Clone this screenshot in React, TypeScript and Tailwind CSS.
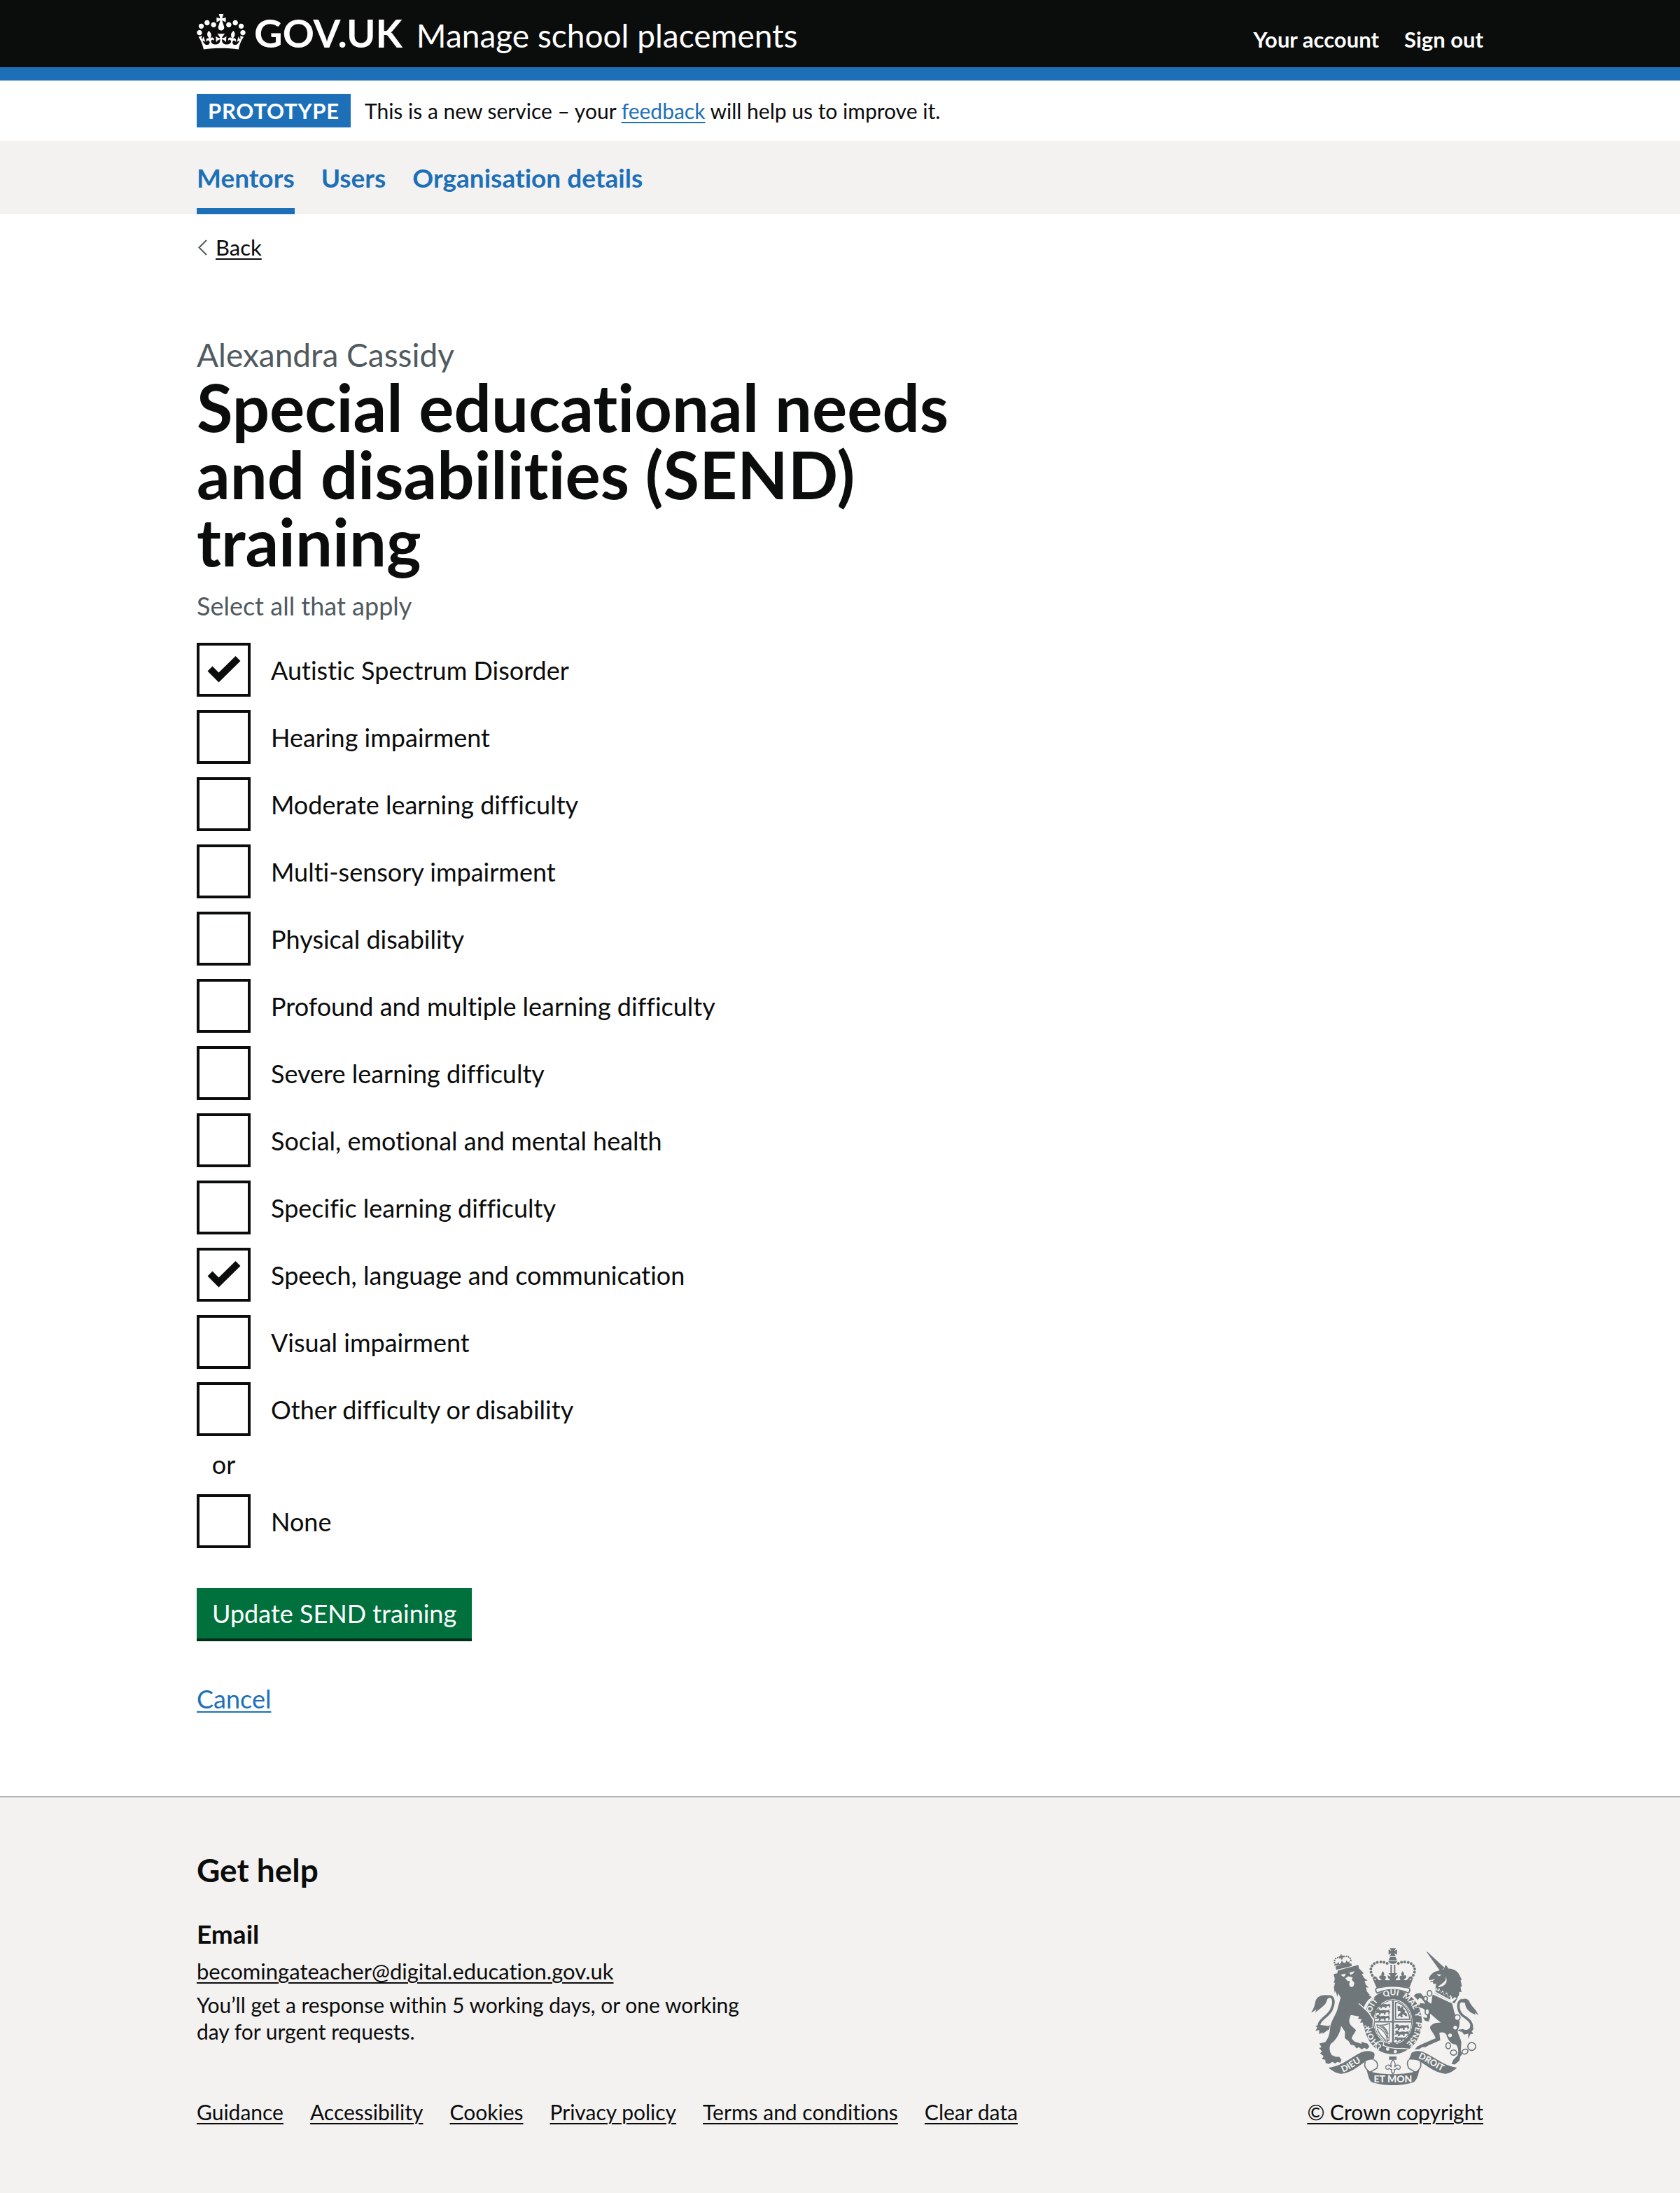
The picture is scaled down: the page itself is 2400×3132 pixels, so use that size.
import { useState } from 'react';
import type { ReactNode } from 'react';

const CREST = '#6f777b';
const PAPER = '#f3f2f1';

const CONDITIONS = [
  'Autistic Spectrum Disorder',
  'Hearing impairment',
  'Moderate learning difficulty',
  'Multi-sensory impairment',
  'Physical disability',
  'Profound and multiple learning difficulty',
  'Severe learning difficulty',
  'Social, emotional and mental health',
  'Specific learning difficulty',
  'Speech, language and communication',
  'Visual impairment',
  'Other difficulty or disability',
];

const FOOTER_LINKS = [
  'Guidance',
  'Accessibility',
  'Cookies',
  'Privacy policy',
  'Terms and conditions',
  'Clear data',
];

function Crown() {
  return (
    <svg viewBox="0 0 132 97" className="h-[51px] w-[70px]" fill="currentColor" aria-hidden="true">
      <path d="M25 30.2c3.5 1.5 7.7-.2 9.1-3.7 1.5-3.6-.2-7.8-3.9-9.2-3.6-1.4-7.6.3-9.1 3.9-1.4 3.5.3 7.5 3.9 9zM9 39.5c3.6 1.5 7.8-.2 9.2-3.7 1.5-3.6-.2-7.8-3.9-9.1-3.6-1.5-7.6.2-9.1 3.8-1.4 3.5.3 7.5 3.8 9zM4.4 57.2c3.5 1.5 7.7-.2 9.1-3.8 1.5-3.6-.2-7.7-3.9-9.1-3.5-1.5-7.6.3-9.1 3.8-1.4 3.5.3 7.6 3.9 9.1zm38.3-21.4c3.5 1.5 7.7-.2 9.1-3.8 1.5-3.6-.2-7.7-3.9-9.1-3.6-1.5-7.6.3-9.1 3.8-1.3 3.6.4 7.7 3.9 9.1zm64.4-5.6c-3.6 1.5-7.8-.2-9.1-3.7-1.5-3.6.2-7.8 3.8-9.2 3.6-1.4 7.7.3 9.2 3.9 1.3 3.5-.4 7.5-3.9 9zm15.9 9.3c-3.6 1.5-7.7-.2-9.1-3.7-1.5-3.6.2-7.8 3.7-9.1 3.6-1.5 7.7.2 9.2 3.8 1.5 3.5-.3 7.5-3.8 9zm4.7 17.7c-3.6 1.5-7.8-.2-9.2-3.8-1.5-3.6.2-7.7 3.9-9.1 3.6-1.5 7.7.3 9.2 3.8 1.3 3.5-.4 7.6-3.9 9.1zM89.3 35.8c-3.6 1.5-7.8-.2-9.2-3.8-1.4-3.6.2-7.7 3.9-9.1 3.6-1.5 7.7.3 9.2 3.8 1.4 3.6-.3 7.7-3.9 9.1zM69.7 17.7l8.9 4.7V9.3l-8.9 2.8c-.2-.3-.5-.6-.9-.9L72.4 0H59.6l3.5 11.2c-.3.3-.6.5-.9.9l-8.8-2.8v13.1l8.8-4.7c.3.3.6.7.9.9l-5 15.4v.1c-.2.8-.4 1.6-.4 2.4 0 4.1 3.1 7.5 7 8.1h.2c.3 0 .7.1 1 .1.4 0 .7 0 1-.1h.2c4-.6 7.1-4.1 7.1-8.1 0-.8-.1-1.7-.4-2.4V34l-5.1-15.4c.4-.2.7-.6 1-.9zM66 92.8c16.9 0 32.8 1.1 47.1 3.2 4-16.9 8.9-26.7 14-33.5l-9.6-3.4c1 4.9 1.1 7.2 0 10.2-1.5-1.4-3-4.3-4.2-8.7L108.6 76c2.8-2 5-3.2 7.5-3.3-4.4 9.4-10 11.9-13.6 11.2-4.3-.8-6.3-4.6-5.6-7.9 1-4.7 5.7-5.9 8-.5 4.3-8.7-3-11.4-7.6-8.8 7.1-7.2 7.9-13.5 2.1-21.1-8 6.1-8.1 12.3-4.5 20.8-4.7-5.4-12.1-2.5-9.5 6.2 3.4-5.2 7.9-2 7.2 3.1-.6 4.3-6.4 7.8-13.5 7.2-10.3-.9-10.9-8-11.2-13.8 2.5-.5 7.1 1.8 11 7.3L80.2 60c-4.1 4.4-8 5.3-12.3 5.4 1.4-4.4 8-11.6 8-11.6H55.5s6.4 7.2 7.9 11.6c-4.2-.1-8-1-12.3-5.4l1.4 16.4c3.9-5.5 8.5-7.7 10.9-7.3-.3 5.8-.9 12.8-11.1 13.8-7.2.6-12.9-2.9-13.5-7.2-.7-5 3.8-8.3 7.1-3.1 2.7-8.7-4.6-11.6-9.4-6.2 3.7-8.5 3.6-14.7-4.6-20.8-5.8 7.6-5 13.9 2.2 21.1-4.7-2.6-11.9.1-7.7 8.8 2.3-5.5 7.1-4.2 8.1.5.7 3.3-1.3 7.1-5.7 7.9-3.5.7-9-1.8-13.5-11.2 2.5.1 4.7 1.3 7.5 3.3l-4.7-15.4c-1.2 4.4-2.7 7.2-4.3 8.7-1.1-3-.9-5.3 0-10.2l-9.5 3.4c5 6.9 9.9 16.7 14 33.5 14.8-2.1 30.8-3.2 47.7-3.2z" />
    </svg>
  );
}

function Crest() {
  const passant =
    'M0 8 l6 -6 8 2 4 5 12 -3 14 2 10 -2 6 -6 -4 8 4 6 -2 9 -6 3 2 -8 -6 -3 -8 4 2 6 -8 2 0 -7 -12 0 -4 7 -8 1 4 -8 -6 -2 -8 3 -4 -3 8 -4z';
  return (
    <svg viewBox="102 68 720 592" className="h-[197px] w-[240px]" fill={CREST} aria-hidden="true">
      {/* royal crown */}
      <path d="M438 69 h28 l-8 12 12 -6 v22 l-12 -6 7 13 h-26 l7 -13 -12 6 v-22 l12 6z" />
      <path d="M440 107 h24 l6 14 h-36z M433 124 h38 c-2 16 -36 16 -38 0z" />
      <path d="M373 196 C350 176 350 134 392 129 C410 127 424 130 432 138" fill="none" stroke={CREST} strokeWidth="12" strokeLinecap="round" strokeDasharray="0.1 14" />
      <path d="M531 196 C554 176 554 134 512 129 C494 127 480 130 472 138" fill="none" stroke={CREST} strokeWidth="12" strokeLinecap="round" strokeDasharray="0.1 14" />
      <path d="M442 140 h6 v38 h-6z M457 140 h6 v38 h-6z" />
      <path d="M364 196 C372 202 374 208 380 207 L376 190 C386 192 384 205 396 207 L406 205 C396 200 390 194 396 188 C402 184 406 188 406 188 C400 182 404 174 410 168 C416 176 418 182 412 188 C424 184 426 196 418 206 L438 207 C440 202 438 196 432 200 L430 184 C436 190 440 190 444 190 L434 176 H471 L461 190 C465 190 469 190 475 184 L472 200 C466 196 464 202 466 207 L486 206 C478 196 480 184 492 188 C486 182 488 176 494 168 C500 174 504 182 498 188 C504 184 508 184 510 190 C512 196 506 200 498 205 L508 207 C520 205 518 192 528 190 L524 207 C530 208 532 202 540 196 L524 238 C480 230 424 230 382 238z" />

      {/* garter */}
      <path fillRule="evenodd" d="M453 247 C520 247 577 306 577 385 C577 464 520 527 453 527 C386 527 328 464 328 385 C328 306 386 247 453 247z M453 289 C406 289 370 332 370 385 C370 438 406 481 453 481 C500 481 536 438 536 385 C536 332 500 289 453 289z" />
      <path d="M385 262 C374 250 378 238 392 238 C430 231 474 231 512 238 C526 238 530 250 519 262 C480 242 424 242 385 262z" fill={PAPER} stroke={CREST} strokeWidth="5" />
      <ellipse cx="453" cy="385" rx="83" ry="96" fill={PAPER} />
      <ellipse cx="453" cy="385" rx="80" ry="92" fill="none" stroke={CREST} strokeWidth="3" />
      <path d="M449 292 h8 v188 h-8z M374 381 h158 v7 h-158z M440 474 h26 v8 h-26z" />
      <path id="garter-line" d="M453 499 A99 114 0 0 1 453 271 A99 114 0 0 1 453 499" fill="none" />
      <g fill={PAPER} fontFamily="Lato" fontWeight="900" fontSize="34">
        <text><textPath href="#garter-line" startOffset="10%">HONI</textPath></text>
        <text><textPath href="#garter-line" startOffset="28%">SOIT</textPath></text>
        <text><textPath href="#garter-line" startOffset="44%">QUI</textPath></text>
        <text><textPath href="#garter-line" startOffset="56%">MAL</textPath></text>
        <text><textPath href="#garter-line" startOffset="69%">Y</textPath></text>
        <text><textPath href="#garter-line" startOffset="75%">PENSE</textPath></text>
      </g>
      <path d={passant} transform="translate(388 303) scale(.9)" />
      <path d={passant} transform="translate(380 328)" />
      <path d={passant} transform="translate(380 353)" />
      <path d={passant} transform="translate(462 393)" />
      <path d={passant} transform="translate(462 420)" />
      <path d={passant} transform="translate(460 447) scale(.8)" />
      <path d="M464 302 c30 2 54 28 62 72 l-62 0z" fill="none" stroke={CREST} strokeWidth="5" />
      <path d="M472 316 l10 2 4 10 4 -10 6 2 2 12 8 4 -4 8 10 6 2 12 -8 -2 -8 -8 -6 4 4 8 -10 2 -2 -8 -12 6 4 -12 10 -6 -2 -8 -10 2z" />
      <path d="M384 398 c22 4 40 0 54 -6 l-2 72 -8 4 c0 -30 -20 -52 -42 -60z M394 402 c18 8 34 26 38 54 M406 402 c12 8 22 20 26 36 M386 416 q8 26 38 50" fill="none" stroke={CREST} strokeWidth="4" />
      <path d="M390 472 C402 462 420 472 410 486 C436 496 466 502 492 499 L522 502 C480 536 420 530 388 508 C374 494 380 480 390 472z" stroke={PAPER} strokeWidth="4" />
      <circle cx="430" cy="502" r="7" fill={PAPER} />
      <circle cx="463" cy="513" r="7" fill={PAPER} />
      <path d="M390 480 q14 4 8 14 q-12 2 -6 12" fill="none" stroke={PAPER} strokeWidth="5" />

      {/* lion's crown */}
      <path d="M206 148 L274 134 L277 147 L209 162z" />
      <path d="M209 145 l-5 -12 l9 4 l4 -10 l6 11 l7 -6 l3 -11 l6 9 l9 3 l5 -12 l6 8 l8 -4 l-2 14z" />
      <path d="M204 141 C196 118 208 104 230 112 C244 100 270 98 273 126" fill="none" stroke={CREST} strokeWidth="7" strokeDasharray="0.1 9.5" strokeLinecap="round" />
      <path d="M226 97 l8 -1 -2 6 8 -2 2 8 -7 -1 2 10 -6 1 -1 -9 -8 3 -2 -8 7 0z" />

      {/* lion */}
      <path d="M166 283 C196 262 206 296 188 334 C172 364 130 380 136 404 C140 424 168 420 186 402" fill="none" stroke={CREST} strokeWidth="11" />
      <path d="M180 272 C150 266 130 276 123 290 C115 308 122 314 102 345 C112 342 118 336 124 332 L119 347 C140 326 166 316 170 290z" />
      <path d="M137 398 L120 402 L128 410 L120 424 L136 420 L136 438 L152 430 L150 438 L168 424 L184 414 L180 404z" />
      <path stroke={PAPER} strokeWidth="6" style={{ paintOrder: 'stroke' }} d="M198 180 L214 177 L216 165 L304 141 L307 156 L328 177 L319 180 L330 198 L344 208 L331 209 L336 226 L349 238 L337 237 L341 255 L354 270 L347 270 L362 279 C345 290 335 305 330 318 L326 326 L340 338 L366 372 L364 408 L352 413 L350 403 L341 409 L337 399 L326 405 L324 388 L312 389 L318 374 L303 372 L307 362 L272 356 C264 372 262 388 272 400 L294 420 C288 436 276 446 276 458 L288 470 L318 480 L318 470 L333 476 L343 478 L352 492 L341 503 L329 496 L320 504 L306 494 L296 499 L286 486 L272 484 L262 468 L246 455 L247 428 L230 402 C228 430 210 462 186 480 C178 494 180 512 190 528 L207 535 L222 535 L232 548 L226 561 L214 557 L205 564 L192 557 L178 566 L164 562 L162 548 L148 545 L155 532 L140 520 L148 512 L136 498 L146 494 L137 478 L162 472 C180 452 182 425 184 404 C190 376 210 352 216 326 L228 282 L218 262 L215 278 L206 252 L203 262 L199 236 L205 216 L199 220 L203 200z" />
      <path d="M228 184 L248 178 L248 188 L240 192z M266 174 L288 168 L282 178 L270 184z" fill={PAPER} />
      <path d="M248 198 L262 190 L280 194 L276 205 L286 216 C290 240 264 242 265 222 L268 210 L258 210z" fill={PAPER} />
      <path d="M306 306 L350 346 L372 384" fill="none" stroke={PAPER} strokeWidth="4" />

      {/* unicorn */}
      <path d="M596 84 L602 86 L674 153 L656 168z" />
      <path d="M608 194 C616 182 628 170 640 168 L670 160 L680 140 L691 157 C716 156 734 172 740 188 L748 204 L743 208 L749 232 L743 236 L747 258 L738 256 L736 270 C728 284 726 296 716 306 L632 262 C640 240 632 230 640 222 L626 222 L624 214 L612 214 L618 206 L608 206z" />
      <path d="M640 180 L662 184 L650 190z M678 188 C688 214 656 222 646 236 C670 236 694 218 678 188z M612 206 L634 202 L622 210z" fill={PAPER} />
      <path d="M640 238 L632 260 L706 302 L726 284 L718 278 L708 288 L702 270 L692 280 L684 258 L674 270 L668 250 L658 260 L652 240 L645 250z" fill={PAPER} />
      <path d="M642 246 l4 10 8 -8 4 14 10 -6 4 14 12 -6 6 16 10 -4 -2 14 -62 -34z" />
      <path stroke={PAPER} strokeWidth="6" style={{ paintOrder: 'stroke' }} d="M624 268 L706 306 C716 330 712 350 728 362 C742 378 742 400 730 424 C736 450 748 462 746 480 L744 510 L750 524 L742 534 L738 552 L726 562 L718 568 L704 566 L712 548 L730 530 C736 512 734 494 722 482 C706 484 690 468 682 440 C674 430 664 428 652 432 L656 464 L606 486 L592 494 L578 494 L566 502 L546 504 L558 490 L580 480 L636 456 C632 440 620 430 612 412 C612 398 630 388 658 388 C640 376 628 362 612 350 L612 366 L606 384 L590 380 L582 366 L600 368 L596 344 L586 330 L564 322 L552 322 L558 312 L566 314 L570 304 L592 308 L576 286 L566 282 L560 292 L542 274 L552 264 L572 262 L600 296 L616 308 C622 296 618 282 624 268z" />
      <path d="M750 290 C722 304 732 350 764 366 C790 384 796 400 788 424" fill="none" stroke={CREST} strokeWidth="11" />
      <path d="M740 300 C746 284 770 280 780 296 C788 320 810 330 820 358 L806 346 L806 354 C784 346 764 332 762 304z" />
      <path d="M728 420 L748 430 L740 416 L758 440 L776 436 L776 458 L786 438 L798 436 L788 422 L800 416 L786 398 C784 420 768 424 752 416z" />
      <g fill={PAPER} stroke={CREST} strokeWidth="5">
        <ellipse cx="610" cy="263" rx="10" ry="12" />
        <ellipse cx="593" cy="286" rx="8" ry="10" />
        <ellipse cx="600" cy="342" rx="9" ry="13" />
        <circle cx="729" cy="367" r="12" />
        <ellipse cx="690" cy="488" rx="10" ry="13" />
        <ellipse cx="713" cy="517" rx="13" ry="11" />
        <ellipse cx="762" cy="513" rx="13" ry="10" transform="rotate(-25 762 513)" />
        <circle cx="791" cy="491" r="17" />
      </g>
      <circle cx="720" cy="410" r="8" fill={PAPER} />
      <circle cx="698" cy="443" r="8" fill={PAPER} />

      {/* ribbon and motto */}
      <path d="M176 582 C240 574 280 530 322 514 C344 506 376 512 374 526 L370 548 C356 546 346 548 334 556 C300 578 270 606 228 608 C208 606 190 594 176 582z" />
      <path d="M728 582 C670 574 624 530 582 514 C560 506 530 512 530 526 L520 548 C540 546 558 548 570 556 C604 578 640 606 680 608 C700 606 714 594 728 582z" />
      <path d="M334 556 C326 580 340 590 354 602 L384 584 C390 566 384 552 370 548 M570 556 C578 580 566 590 550 602 L520 584 C514 566 512 560 520 548" fill="none" stroke={CREST} strokeWidth="5" />
      <path d="M340 592 C380 616 520 616 566 592 C560 618 556 634 542 644 C494 661 410 661 362 644 C348 634 346 614 340 592z" />
      <path id="motto-left" d="M238 602 C270 592 300 562 336 548" fill="none" />
      <path id="motto-right" d="M560 540 C600 556 640 590 680 604" fill="none" />
      <g fill={PAPER} fontFamily="Lato" fontWeight="900">
        <text fontSize="38"><textPath href="#motto-left">DIEU</textPath></text>
        <text fontSize="38"><textPath href="#motto-right">DROIT</textPath></text>
        <text x="453" y="646" fontSize="42" textAnchor="middle">ET MON</text>
      </g>
      <path d="M436 534 h32 v14 h-32z" />
      <path d="M453 548 C466 562 462 570 460 580 C466 566 486 568 484 584 C480 592 472 590 470 584 L464 590 L458 590 L460 600 L453 608 L446 600 L448 590 L442 590 L436 584 C434 590 426 592 422 584 C420 568 440 566 446 580 C444 570 440 562 453 548z" fill={PAPER} stroke={CREST} strokeWidth="4" />
    </svg>
  );
}

function Container({ children }: { children: ReactNode }) {
  return (
    <div className="px-8">
      <div className="mx-auto max-w-[1838px]">{children}</div>
    </div>
  );
}

function Checkbox({ label, checked, onChange }: { label: string; checked: boolean; onChange: () => void }) {
  return (
    <label className="flex w-fit items-center gap-[29px] text-[36px] leading-[48px]">
      <span className="grid size-[77px] shrink-0">
        <input
          type="checkbox"
          checked={checked}
          onChange={onChange}
          className="peer col-start-1 row-start-1 size-full appearance-none border-4 border-[#0b0c0c]"
        />
        <svg
          viewBox="0 0 77 77"
          className="pointer-events-none invisible col-start-1 row-start-1 size-full peer-checked:visible"
          fill="#0b0c0c"
          aria-hidden="true"
        >
          <path d="M15.5 40.5 L22.5 33.5 L31.5 42.5 L55.5 19 L62.5 26 L31.5 56.5z" />
        </svg>
      </span>
      {label}
    </label>
  );
}

export default function App() {
  const [selected, setSelected] = useState<string[]>([
    'Autistic Spectrum Disorder',
    'Speech, language and communication',
  ]);
  const toggle = (name: string) =>
    setSelected((s) => (s.includes(name) ? s.filter((n) => n !== name) : [...s, name]));

  return (
    <div className="bg-white font-[Lato,sans-serif] text-[#0b0c0c] [font-variant-ligatures:no-common-ligatures]">
      <header className="border-b-[19px] border-[#1d70b8] bg-[#0b0c0c] text-white">
        <Container>
          <div className="flex h-24 items-baseline pt-5">
            <a href="#" className="flex items-baseline gap-3 text-[56px] leading-[54px] font-bold">
              <span className="self-start">
                <Crown />
              </span>
              GOV.UK
            </a>
            <a href="#" className="ml-5 text-[46px] leading-[54px]">
              Manage school placements
            </a>
            <nav className="ml-auto flex gap-9 text-[31px] leading-[38px] font-bold">
              <a href="#">Your account</a>
              <a href="#">Sign out</a>
            </nav>
          </div>
        </Container>
      </header>

      <Container>
        <div className="flex items-center gap-5 py-[19px] text-[30px]">
          <strong className="bg-[#1d70b8] px-4 text-[31px] leading-[48px] tracking-wide text-white">PROTOTYPE</strong>
          <span className="leading-[38px]">
            This is a new service – your{' '}
            <a href="#" className="text-[#1d70b8] underline decoration-2 underline-offset-4">
              feedback
            </a>{' '}
            will help us to improve it.
          </span>
        </div>
      </Container>

      <nav className="bg-[#f3f2f1] text-[37px] leading-[49px] font-bold text-[#1d70b8]">
        <Container>
          <div className="flex gap-[38px]">
            <a href="#" aria-current="page" className="py-7 shadow-[inset_0_-9px_0_#1d70b8]">
              Mentors
            </a>
            <a href="#" className="py-7">
              Users
            </a>
            <a href="#" className="py-7">
              Organisation details
            </a>
          </div>
        </Container>
      </nav>

      <Container>
        <a href="#" className="mt-7 flex w-fit items-center gap-3 text-[31px] leading-[38px]">
          <svg viewBox="0 0 14 24" className="ml-px h-6 w-3.5" fill="none" stroke="#505a5f" strokeWidth="2" aria-hidden="true">
            <path d="M13 2 L2.5 12.5 L13 23" />
          </svg>
          <span className="underline decoration-2 underline-offset-4">Back</span>
        </a>

        <main>
          <form onSubmit={(e) => e.preventDefault()}>
            <h1 className="max-w-[1220px]">
              <span className="mt-[109px] block text-[46px] leading-[52px] text-[#505a5f]">Alexandra Cassidy</span>
              <span className="block max-w-[1140px] text-[94px] leading-[96px] font-bold">
                Special educational needs and disabilities (SEND) training
              </span>
            </h1>
            <p className="mt-5 text-[36px] leading-[48px] text-[#505a5f]">Select all that apply</p>

            <div className="mt-[29px] flex flex-col gap-[19px]">
              {CONDITIONS.map((name) => (
                <Checkbox key={name} label={name} checked={selected.includes(name)} onChange={() => toggle(name)} />
              ))}
            </div>
            <p className="mt-4 w-[77px] text-center text-[36px] leading-[48px]">or</p>
            <div className="mt-[19px]">
              <Checkbox label="None" checked={selected.includes('None')} onChange={() => toggle('None')} />
            </div>

            <button
              type="submit"
              className="mt-[57px] block border-b-4 border-[#002d18] bg-[#00703c] px-[22px] py-3 text-[36px] leading-[48px] text-white"
            >
              Update SEND training
            </button>
          </form>
          <a
            href="#"
            className="mt-[58px] block w-fit text-[36px] leading-[48px] text-[#1d70b8] underline decoration-2 underline-offset-4"
          >
            Cancel
          </a>
        </main>
      </Container>

      <footer className="mt-[115px] border-t-2 border-[#b1b4b6] bg-[#f3f2f1] pt-[75px] pb-[97px]">
        <Container>
          <h2 className="text-[46px] leading-[57px] font-bold">Get help</h2>
          <div className="flex items-end justify-between">
            <div className="text-[30px] leading-[38px]">
              <h3 className="mt-[39px] text-[37px] leading-[48px] font-bold">Email</h3>
              <a href="#" className="mt-2.5 block w-fit text-[31px] underline decoration-2 underline-offset-4">
                becomingateacher@digital.education.gov.uk
              </a>
              <p className="mt-2.5 max-w-[800px]">
                You’ll get a response within 5 working days, or one working day for urgent requests.
              </p>
              <ul className="mt-[77px] flex flex-wrap gap-x-[38px]">
                {FOOTER_LINKS.map((name) => (
                  <li key={name}>
                    <a href="#" className="underline decoration-2 underline-offset-4">
                      {name}
                    </a>
                  </li>
                ))}
              </ul>
            </div>
            <a href="#" className="flex flex-col items-center gap-[18px] text-[30px] leading-[38px]">
              <Crest />
              <span className="underline decoration-2 underline-offset-4">© Crown copyright</span>
            </a>
          </div>
        </Container>
      </footer>
    </div>
  );
}
